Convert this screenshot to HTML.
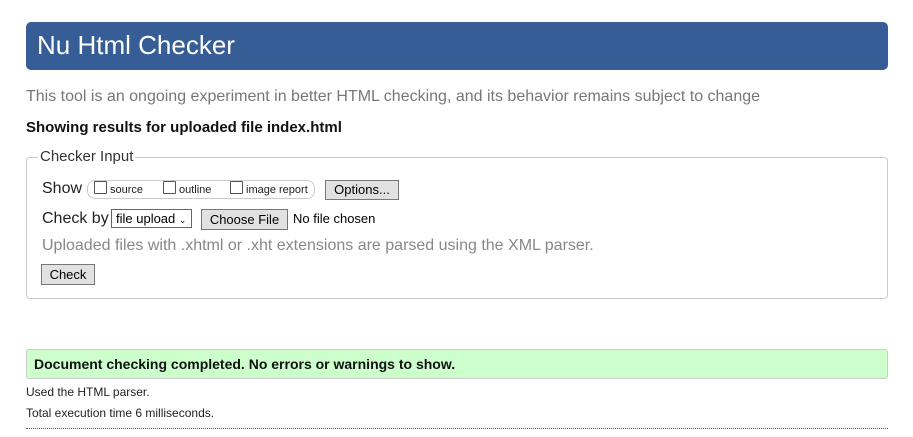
<!DOCTYPE html>
<html><head><style>
body{margin:0;width:913px;height:437px;background:#fff;font-family:"Liberation Sans",Arial,sans-serif;position:relative;overflow:hidden;color:#222}
.a{position:absolute;white-space:nowrap}
.btn{position:absolute;background:#e1e1e1;border:1px solid #777;font-size:13px;color:#000;text-align:center;box-sizing:border-box}
.cb{display:inline-block;width:11px;height:11px;border:1px solid #555;vertical-align:-1px;margin-right:3px;border-radius:1px}
</style></head><body>
<div class="a" style="left:26px;top:22px;width:862px;height:48px;background:#365d95;border-radius:5px"></div>
<div class="a" style="left:37px;top:30px;font-size:26px;color:#fff;line-height:30px">Nu Html Checker</div>
<div class="a" style="left:26px;top:88px;font-size:16px;color:#777;line-height:18px">This tool is an ongoing experiment in better HTML checking, and its behavior remains subject to change</div>
<div class="a" style="left:26px;top:119px;font-size:15px;font-weight:bold;color:#111;line-height:17px">Showing results for uploaded file index.html</div>
<div class="a" style="left:26px;top:157px;width:860px;height:140px;border:1px solid #ccc;border-radius:4px"></div>
<div class="a" style="left:38px;top:148px;background:#fff;padding:0 2px;font-size:15px;color:#333;line-height:17px">Checker Input</div>
<div class="a" style="left:42px;top:180px;font-size:16px;color:#222;line-height:18px">Show</div>
<div class="a" style="left:87px;top:180px;width:226px;height:17px;border:1px solid #ccc;border-radius:8px;font-size:11px;line-height:17px;color:#222">
<span style="position:absolute;left:6px"><span class="cb"></span>source</span>
<span style="position:absolute;left:75px"><span class="cb"></span>outline</span>
<span style="position:absolute;left:142px"><span class="cb"></span>image report</span></div>
<div class="btn" style="left:325px;top:180px;width:74px;height:20px;line-height:18px">Options...</div>
<div class="a" style="left:42px;top:210px;font-size:16px;color:#222;line-height:18px">Check by</div>
<div class="a" style="left:111px;top:209px;width:81px;height:19px;border:1px solid #666;box-sizing:border-box;font-size:13px;line-height:17px;padding-left:4px;color:#000">file upload <span style="font-size:9px">&#8964;</span></div>
<div class="btn" style="left:201px;top:209px;width:87px;height:21px;line-height:19px">Choose File</div>
<div class="a" style="left:293px;top:211px;font-size:13px;color:#000;line-height:16px">No file chosen</div>
<div class="a" style="left:42px;top:237px;font-size:16px;color:#888;line-height:18px">Uploaded files with .xhtml or .xht extensions are parsed using the XML parser.</div>
<div class="btn" style="left:41px;top:264px;width:54px;height:21px;line-height:19px">Check</div>
<div class="a" style="left:26px;top:349px;width:860px;height:28px;background:#ccffcc;border:1px solid #ccc;border-radius:3px"></div>
<div class="a" style="left:34px;top:356px;font-size:14px;font-weight:bold;color:#111;line-height:16px">Document checking completed. No errors or warnings to show.</div>
<div class="a" style="left:26px;top:385px;font-size:12px;color:#222;line-height:14px">Used the HTML parser.</div>
<div class="a" style="left:26px;top:406px;font-size:12px;color:#222;line-height:14px">Total execution time 6 milliseconds.</div>
<div class="a" style="left:26px;top:428px;width:862px;border-top:1px dotted #555"></div>
</body></html>
